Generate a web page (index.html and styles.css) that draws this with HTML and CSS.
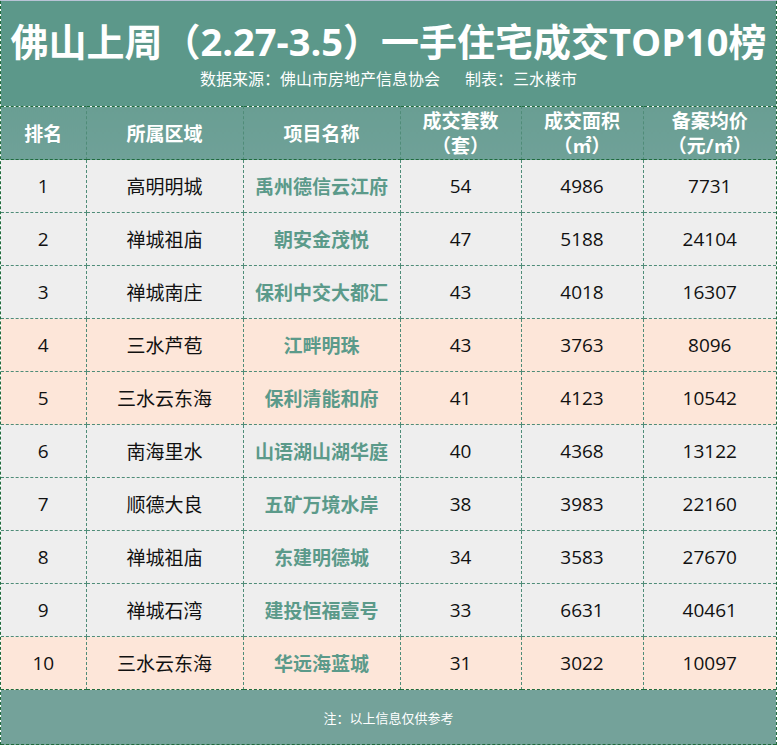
FILE: index.html
```html
<!DOCTYPE html>
<html lang="zh-CN">
<head>
<meta charset="utf-8">
<title>佛山上周一手住宅成交TOP10榜</title>
<link rel="stylesheet" href="styles.css">
</head>
<body>
<div class="topline"></div>
<div class="sheet">
  <div class="banner">
    <h1 class="title">佛山上周（2.27-3.5）一手住宅成交TOP10榜</h1>
    <p class="sub"><span>数据来源：佛山市房地产信息协会</span><span>制表：三水楼市</span></p>
  </div>
  <table class="rank">
    <colgroup>
      <col class="c1"><col class="c2"><col class="c3"><col class="c4"><col class="c5"><col class="c6">
    </colgroup>
    <thead>
      <tr>
        <th>排名</th><th>所属区域</th><th>项目名称</th>
        <th>成交套数<br>（套）</th><th>成交面积<br>（㎡）</th><th>备案均价<br>（元/㎡）</th>
      </tr>
    </thead>
    <tbody>
      <tr class="g"><td>1</td><td>高明明城</td><td class="p">禹州德信云江府</td><td>54</td><td>4986</td><td>7731</td></tr>
      <tr class="g"><td>2</td><td>禅城祖庙</td><td class="p">朝安金茂悦</td><td>47</td><td>5188</td><td>24104</td></tr>
      <tr class="g"><td>3</td><td>禅城南庄</td><td class="p">保利中交大都汇</td><td>43</td><td>4018</td><td>16307</td></tr>
      <tr class="o gs"><td>4</td><td>三水芦苞</td><td class="p">江畔明珠</td><td>43</td><td>3763</td><td>8096</td></tr>
      <tr class="o"><td>5</td><td>三水云东海</td><td class="p">保利清能和府</td><td>41</td><td>4123</td><td>10542</td></tr>
      <tr class="g gs"><td>6</td><td>南海里水</td><td class="p">山语湖山湖华庭</td><td>40</td><td>4368</td><td>13122</td></tr>
      <tr class="g"><td>7</td><td>顺德大良</td><td class="p">五矿万境水岸</td><td>38</td><td>3983</td><td>22160</td></tr>
      <tr class="g"><td>8</td><td>禅城祖庙</td><td class="p">东建明德城</td><td>34</td><td>3583</td><td>27670</td></tr>
      <tr class="g"><td>9</td><td>禅城石湾</td><td class="p">建投恒福壹号</td><td>33</td><td>6631</td><td>40461</td></tr>
      <tr class="o gs"><td>10</td><td>三水云东海</td><td class="p">华远海蓝城</td><td>31</td><td>3022</td><td>10097</td></tr>
    </tbody>
  </table>
  <div class="foot">注：以上信息仅供参考</div>
</div>
</body>
</html>
```

FILE: styles.css
```css
html, body {
  margin: 0;
  padding: 0;
  background: #ffffff;
}
body {
  width: 779px;
  height: 745px;
  overflow: hidden;
  font-family: "Open Sans", "Noto Sans CJK SC", sans-serif;
}
.topline {
  height: 1px;
  background: #b9c3d6;
  margin-right: 2px;
}
.sheet {
  width: 777px;
  box-sizing: border-box;
  border-left: 1px dashed #1f6b3c;
  border-right: 1px dashed #1f6b3c;
}
.banner {
  height: 105px;
  background: #5c988a;
  color: #ffffff;
  display: flex;
  flex-direction: column;
  align-items: center;
  box-sizing: border-box;
  padding-top: 15px;
}
.title {
  margin: 0;
  font-size: 38px;
  font-weight: 700;
  line-height: 51px;
  white-space: nowrap;
}
.sub {
  margin: 1px 0 0;
  font-size: 16px;
  line-height: 22px;
  display: flex;
  gap: 25px;
}
.rank {
  width: 100%;
  border-collapse: collapse;
  table-layout: fixed;
}
.c1 { width: 85px; }
.c2 { width: 157px; }
.c3 { width: 157px; }
.c4 { width: 121px; }
.c5 { width: 122px; }
.c6 { width: auto; }
.rank th, .rank td {
  border: 1px dashed #4f8c78;
  text-align: center;
  padding: 0;
  font-size: 19px;
}
.rank tr > :first-child { border-left: none; }
.rank tr > :last-child { border-right: none; }
.rank thead th {
  background: linear-gradient(#699e93, #6fa198);
  color: #ffffff;
  font-weight: 700;
  height: 50px;
  line-height: 25px;
  padding-top: 2px;
  border-top: 1px dashed #1f6b3c;
  border-bottom: 1px dashed #1f6b3c;
}
.rank td {
  height: 52px;
  color: #111111;
}
.rank tr.g td { background: #eeeeee; }
.rank tr.o td { background: #fde6d9; }
.rank tr.gs td { border-top: 1px dashed #1f6b3c; }
.rank tbody tr:last-child td { border-bottom: 1px dashed #1f6b3c; }
.rank td.p {
  color: #5b9a8a;
  font-weight: 700;
}
.foot {
  height: 55px;
  background: #74a29a;
  color: #ffffff;
  font-size: 13px;
  display: flex;
  align-items: center;
  justify-content: center;
  border-bottom: 1px dashed #1f6b3c;
  box-sizing: border-box;
}
```
